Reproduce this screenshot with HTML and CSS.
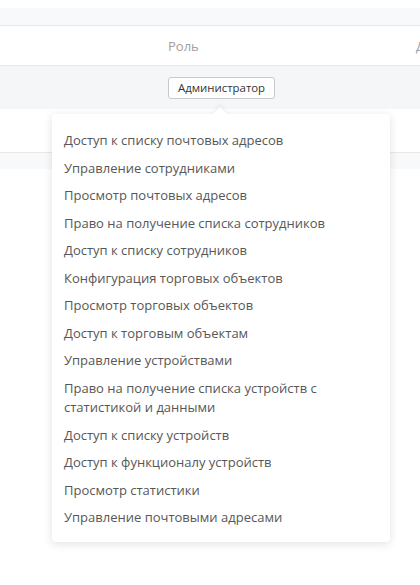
FILE: index.html
```html
<!DOCTYPE html>
<html lang="ru">
<head>
<meta charset="utf-8">
<link rel="stylesheet" href="styles.css">
</head>
<body>
<div class="page">
  <div class="band"></div>
  <div class="table">
    <div class="row head">
      <div class="cell c1"></div>
      <div class="cell c2">Роль</div>
      <div class="cell c3">Доступ</div>
    </div>
    <div class="row hover">
      <div class="cell c1"></div>
      <div class="cell c2"><span class="tag">Администратор</span></div>
      <div class="cell c3"></div>
    </div>
    <div class="row">
      <div class="cell c1"></div>
      <div class="cell c2"></div>
      <div class="cell c3"></div>
    </div>
  </div>
  <div class="footband"></div>

  <div class="popover">
    <div class="arrow"></div>
    <ul class="list">
      <li>Доступ к списку почтовых адресов</li>
      <li>Управление сотрудниками</li>
      <li>Просмотр почтовых адресов</li>
      <li>Право на получение списка сотрудников</li>
      <li>Доступ к списку сотрудников</li>
      <li>Конфигурация торговых объектов</li>
      <li>Просмотр торговых объектов</li>
      <li>Доступ к торговым объектам</li>
      <li>Управление устройствами</li>
      <li>Право на получение списка устройств с статистикой и данными</li>
      <li>Доступ к списку устройств</li>
      <li>Доступ к функционалу устройств</li>
      <li>Просмотр статистики</li>
      <li>Управление почтовыми адресами</li>
    </ul>
  </div>
</div>
</body>
</html>
```

FILE: styles.css
```css
* { box-sizing: border-box; }
html, body {
  margin: 0;
  padding: 0;
  background: #fff;
}
body {
  font-family: "Open Sans", "Noto Sans", sans-serif;
  font-size: 13px;
  color: #575757;
  overflow: hidden;
}
.page {
  position: relative;
  width: 420px;
  height: 585px;
  padding-top: 8px;
}
.band {
  height: 17px;
  background: #f8f9fa;
}
.table {
  border-top: 1px solid #e8e8e8;
}
.row {
  display: flex;
  border-bottom: 1px solid #e8e8e8;
}
.row.head { height: 40px; }
.row.hover { height: 43px; background: #f5f6f8; border-bottom: none; }
.row:last-child { height: 44px; }
.cell {
  display: flex;
  align-items: center;
  padding-left: 12px;
  white-space: nowrap;
}
.c1 { width: 156px; flex-shrink: 0; }
.c2 { width: 248px; flex-shrink: 0; }
.c3 { flex: 1; min-width: 0; overflow: hidden; }
.head .cell { color: #a0a0a0; }
.tag {
  display: inline-block;
  height: 22px;
  line-height: 20px;
  padding: 0 9px;
  border: 1px solid #c9c9c9;
  border-radius: 3px;
  background: #fff;
  color: #333;
  font-size: 11.4px;
}
.footband {
  height: 16px;
  background: #f8f9fa;
}
.popover {
  position: absolute;
  left: 52px;
  top: 114px;
  width: 338px;
  background: #fff;
  border-radius: 4px;
  box-shadow: 0 2px 10px rgba(0, 0, 0, 0.12);
  padding: 13px 0 10px;
}
.arrow {
  position: absolute;
  top: -5px;
  left: 163px;
  width: 10px;
  height: 10px;
  background: #fff;
  transform: rotate(45deg);
  box-shadow: -2px -2px 4px rgba(0, 0, 0, 0.05);
}
.list {
  position: relative;
  list-style: none;
  margin: 0;
  padding: 0;
}
.list li {
  padding: 4px 12px;
  line-height: 19.5px;
  color: #575757;
}
```
